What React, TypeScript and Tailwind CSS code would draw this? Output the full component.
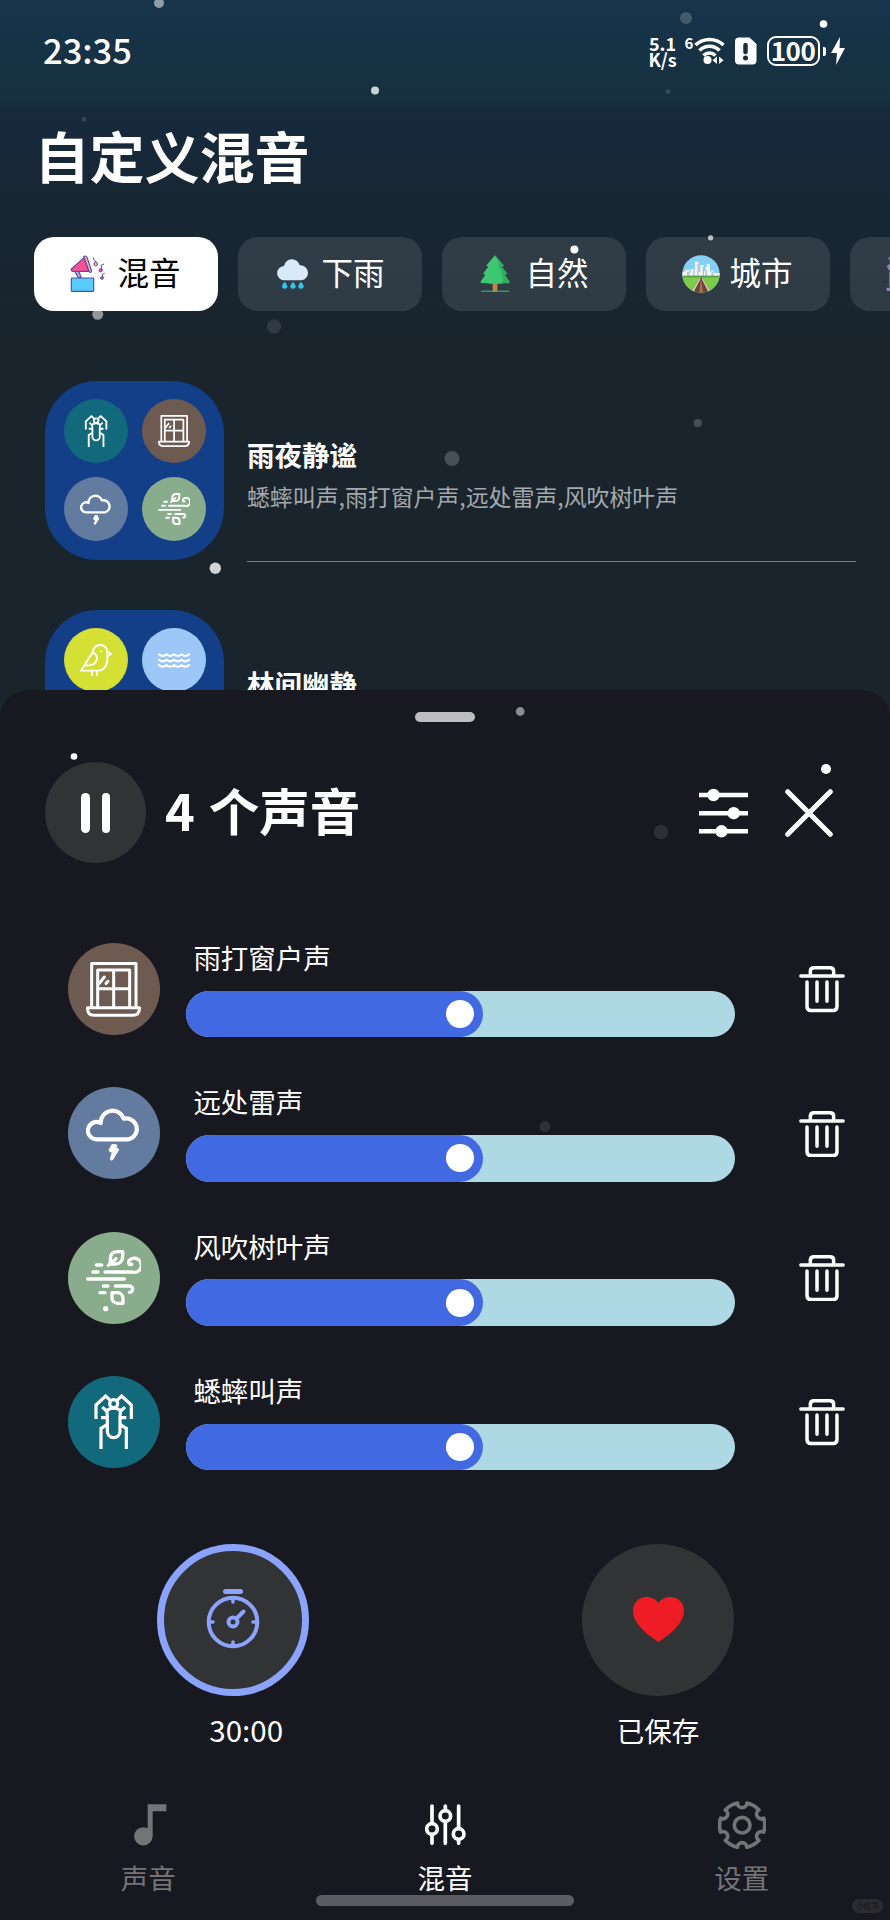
import clsx from "clsx";
import type { ReactNode } from "react";

type SoundId = "cricket" | "window" | "thunder" | "wind" | "bird" | "waves";

const soundColors: Record<SoundId, string> = {
  cricket: "bg-[#12697b]",
  window: "bg-[#6d5b51]",
  thunder: "bg-[#627b9f]",
  wind: "bg-[#89ac8d]",
  bird: "bg-[#d4e033]",
  waves: "bg-[#9cc7f7]",
};

const soundGlyphs: Record<SoundId, ReactNode> = {
  cricket: (
    <g strokeWidth="9.5" strokeLinecap="butt" strokeLinejoin="miter">
      <circle cx="83" cy="29" r="12" />
      <path d="M66 45C60 52 64 60 64 68V112A19 19 0 0 0 102 112V68C102 60 106 52 100 45" />
      <path d="M66 47Q83 38 100 47" />
      <path d="M30 75V33L59 6L73 19M136 75V33L107 6L93 19" />
      <path d="M49 39L63 53M117 39L103 53M45 71H62M121 71H104" />
      <path d="M45 165V103L63 92M121 165V103L103 92" />
    </g>
  ),
  window: (
    <g strokeWidth="9">
      <path d="M17 136V4.500H150V136M35 136V24H131V136M83 24V136M35 80H131" />
      <path d="M40 64L55 45M60 64L66 58" />
      <path d="M4.500 137H160.500C160.500 152 153 160 141 160H24C12 160 4.500 152 4.500 137Z" />
    </g>
  ),
  thunder: (
    <g strokeWidth="12.500">
      <path d="M32 100A26 26 0 1 1 44 51A35.5 35.5 0 0 1 113 38A31 31 0 1 1 128 100Z" />
      <path
        d="M80 119L73 133L83 136L77 159L94 131L84 129L89 120Z"
        fill="currentColor"
        strokeWidth="10"
      />
    </g>
  ),
  wind: (
    <g strokeWidth="10">
      <path d="M57 66H139A21 21 0 1 0 129 32C126 40 131 46 137 43" />
      <path d="M31 45H47M21 66H36M5 87H115M52 108H66M42 128H57" />
      <path d="M88 108H131A9.5 9.5 0 0 1 130 127" />
      <path d="M73 41V26C73 12 82 5 96 5H110V18C110 32 102 42 88 42H74M67 46L90 26" />
      <path d="M78 128H93C104 128 111 136 111 146V160H96C84 160 78 152 78 144Z" />
    </g>
  ),
  bird: (
    <g strokeWidth="5.5" transform="scale(1.72)">
      <path d="M3 80L38 25C40 12 48 3 60 3C73 3 82 12 82 24V46C82 66 70 80 54 80Z" />
      <path d="M82 22L93 30L82 38M38 25C52 30 54 45 46 55C40 63 30 66 14 64" />
      <path d="M36 81V93M51 81V93M63 22V22.1" />
    </g>
  ),
  waves: (
    <g strokeWidth="6" transform="scale(1.72)">
      <path d="M3 31q11 10 22.500 0q11 10 22.500 0q11 10 22.500 0q11 10 22.500 0" />
      <path d="M3 47q11 10 22.500 0q11 10 22.500 0q11 10 22.500 0q11 10 22.500 0" />
      <path d="M3 63q11 10 22.500 0q11 10 22.500 0q11 10 22.500 0q11 10 22.500 0" />
    </g>
  ),
};

function SoundBadge({ id, large }: { id: SoundId; large?: boolean }) {
  return (
    <div
      className={clsx(
        "flex shrink-0 items-center justify-center rounded-full text-white",
        large ? "size-[92px]" : "size-[64px]",
        soundColors[id]
      )}
    >
      <svg
        viewBox="0 0 165 165"
        fill="none"
        stroke="currentColor"
        strokeLinecap="round"
        strokeLinejoin="round"
        className={large ? "size-[55px]" : "size-[32px]"}
      >
        {soundGlyphs[id]}
      </svg>
    </div>
  );
}

function GramophoneIcon() {
  return (
    <svg viewBox="0 0 114 114" className="size-[38px]" fill="none">
      <g stroke="#5b4ba8" strokeWidth="3.5" strokeLinejoin="round">
        <path d="M15 50L25 68H34L26 48Z" fill="#b9a5e0" />
        <rect x="4" y="69" width="67" height="40" rx="2" fill="#5acbfd" />
        <path d="M4 42Q2 48 8 49L56 49L42 8Z" fill="#ff4f93" />
        <path d="M41 5Q46 0 51 7L65 48Q64 54 58 51Z" fill="#fdb59b" />
      </g>
      <g stroke="#5b4ba8" strokeWidth="3">
        <circle cx="77" cy="27" r="5.5" fill="#fdb59b" />
        <path d="M79 22L71 13V7" />
        <circle cx="92" cy="46" r="5" fill="#ff4f93" />
        <path d="M96 45L93 31L102 27" />
        <circle cx="96" cy="69" r="4" fill="#ff4f93" />
        <path d="M99 68L97 58L104 55" />
      </g>
    </svg>
  );
}

function RainIcon() {
  return (
    <svg viewBox="0 0 114 114" className="size-[38px]">
      <path
        d="M32 76A20 20 0 0 1 30 33A24 24 0 0 1 77 31A22 22 0 0 1 82 76Z"
        fill="#d8e9f8"
      />
      <g fill="#35c3ea">
        <path d="M32 80Q40 88 40 94A8 7 0 0 1 24 94Q24 88 32 80Z" />
        <path d="M57 80Q65 88 65 94A8 7 0 0 1 49 94Q49 88 57 80Z" />
        <path d="M81 80Q89 88 89 94A8 7 0 0 1 73 94Q73 88 81 80Z" />
      </g>
    </svg>
  );
}

function TreeIcon() {
  return (
    <svg viewBox="0 0 114 114" className="mr-[1.500px] -ml-[1.500px] size-[38px]">
      <rect x="50" y="84" width="14" height="26" fill="#c68642" />
      <rect x="15" y="107" width="85" height="3" fill="#3cc46c" />
      <path
        d="M57 1L84 32L77 35L94 56L86 59L101 81Q98 87 88 84Q57 90 26 84Q16 87 13 81L28 59L21 56L37 35L30 32Z"
        fill="#3cc870"
      />
      <path
        d="M57 1L84 32L77 35L94 56L86 59L101 81Q98 87 88 84Q78 86 70 86Q90 76 76 62Q84 54 68 38Q74 30 57 1Z"
        fill="#2fae60"
      />
    </svg>
  );
}

function CityIcon() {
  return (
    <svg viewBox="0 0 114 114" className="size-[38px]">
      <clipPath id="city-clip">
        <circle cx="57" cy="57" r="56" />
      </clipPath>
      <g clipPath="url(#city-clip)">
        <rect width="114" height="114" fill="#86d0f7" />
        <path
          d="M0 66V50H10V44H22V54H26V42H34V46H39V20H50V50H55V30H66V48H70V36H74V28H84V50H88V46H94V54H114V66Z"
          fill="#f4f4f2"
        />
        <path
          d="M15 66V50H22V66ZM34 66V46H38V66ZM46 66V26H50V66ZM62 66V34H66V66ZM70 66V46H75V66ZM88 66V50H94V66Z"
          fill="#b8c3d0"
        />
        <rect y="66" width="114" height="48" fill="#7ecb4b" />
        <rect y="62" width="114" height="5" fill="#4f9e48" />
        <path d="M54 68H61L86 114H28Z" fill="#6b4439" />
        <path d="M54 68L28 114H33L55 73ZM61 68L86 114H81L60 73Z" fill="#f0d9c8" />
        <path d="M57 70L52 114H63Z" fill="#a6705c" />
      </g>
    </svg>
  );
}

function TempleIcon() {
  return (
    <svg viewBox="0 0 114 114" className="size-[38px]" fill="#8a86b8">
      <path d="M8 6H106V14H8ZM2 34L14 24H100L112 34L106 46H8ZM10 50H24V94H10ZM90 50H104V94H90ZM2 98H112V108H2Z" />
    </svg>
  );
}

const categories = [
  { name: "混音", icon: <GramophoneIcon />, active: true },
  { name: "下雨", icon: <RainIcon /> },
  { name: "自然", icon: <TreeIcon /> },
  { name: "城市", icon: <CityIcon /> },
  { name: "", icon: <TempleIcon /> },
];

const mixes: { name: string; detail: string; sounds: SoundId[] }[] = [
  {
    name: "雨夜静谧",
    detail: "蟋蟀叫声,雨打窗户声,远处雷声,风吹树叶声",
    sounds: ["cricket", "window", "thunder", "wind"],
  },
  {
    name: "林间幽静",
    detail: "",
    sounds: ["bird", "waves"],
  },
];

const playing: { id: SoundId; name: string; volume: number }[] = [
  { id: "window", name: "雨打窗户声", volume: 50 },
  { id: "thunder", name: "远处雷声", volume: 50 },
  { id: "wind", name: "风吹树叶声", volume: 50 },
  { id: "cricket", name: "蟋蟀叫声", volume: 50 },
];

// x, y, radius, opacity
const snow = [
  [159, 3, 5, 0.52],
  [375, 90.5, 4, 0.78],
  [84, 119, 2.5, 0.12],
  [686, 18, 6, 0.2],
  [668, 91.5, 2.5, 0.12],
  [823.5, 24, 3.8, 1],
  [97.7, 314.3, 5.5, 0.52],
  [274, 326.5, 7.2, 0.1],
  [574.4, 249.6, 4, 1],
  [710.6, 237.8, 2.6, 0.7],
  [452, 458.5, 7.5, 0.2],
  [697.7, 423, 4, 0.2],
  [215.3, 568.3, 5.7, 0.8],
  [520.2, 711.5, 4.4, 0.5],
  [74, 756.5, 3.3, 1],
  [826, 769, 5, 1],
  [661, 832, 7.3, 0.1],
  [545, 1126.5, 5.4, 0.1],
  [105.7, 1308.7, 2.6, 1],
];

function Snow() {
  return (
    <svg
      viewBox="0 0 890 1920"
      fill="#fff"
      className="pointer-events-none absolute inset-0 h-full w-full"
    >
      {snow.map(([x, y, r, opacity]) => (
        <circle key={`${x}-${y}`} cx={x} cy={y} r={r} opacity={opacity} />
      ))}
    </svg>
  );
}

function StatusBar() {
  return (
    <div className="flex h-[102px] shrink-0 items-center justify-between pr-[45px] pl-[43px]">
      <div className="-mt-[5px] text-[34.500px] leading-[52px] font-medium">
        23:35
      </div>
      <div className="flex items-center">
        <div className="flex w-[30px] flex-col items-center text-[18px] leading-[16.500px] font-bold">
          <span>5.1</span>
          <span>K/s</span>
        </div>
        <div className="-mt-[16px] ml-[7px] w-[9px] text-[15px] leading-[22px] font-bold">
          6
        </div>
        <svg viewBox="8 0 32 30" className="h-[30px] w-[32px]">
          <g fill="none" stroke="#fff" strokeWidth="3.600">
            <path d="M9.500 9A20.500 20.500 0 0 1 37.500 9" />
            <path d="M13.500 14.500A14 14 0 0 1 33.500 14.500" />
            <path d="M17.500 19.500A8.500 8.500 0 0 1 29.500 19.500" />
          </g>
          <circle cx="21.500" cy="24" r="4" fill="#fff" />
          <path d="M31 20.500V28L26.500 24.200ZM33 20.500V28L37.500 24.200Z" fill="#fff" />
        </svg>
        <svg viewBox="0 0 22 28" className="ml-[9px] h-[28px] w-[22px]">
          <path
            d="M4 0.500H14.500L21.500 7V23.500A4 4 0 0 1 17.500 27.500H4A4 4 0 0 1 0 23.500V4.500A4 4 0 0 1 4 0.500Z"
            fill="#fff"
          />
          <path d="M10.500 8V15" stroke="#15303f" strokeWidth="4.500" strokeLinecap="round" />
          <circle cx="10.500" cy="21" r="2.500" fill="#15303f" />
        </svg>
        <div className="ml-[10px] flex h-[30px] w-[53px] items-center justify-center rounded-[9px] border-2 border-white text-[26px] leading-[38px] font-bold tracking-[-0.500px]">
          <span className="-mt-[2px]">100</span>
        </div>
        <div className="ml-[3px] h-[9px] w-[3.500px] rounded-r-[2px] bg-white" />
        <svg viewBox="0 0 14 28" className="ml-[5px] h-[28px] w-[14px]" fill="#fff">
          <path d="M9 0L0 16H6L5 28L14 11H8.500Z" />
        </svg>
      </div>
    </div>
  );
}

function Categories() {
  return (
    <div className="mt-[42px] flex shrink-0 gap-[20px] overflow-hidden pl-[34px]">
      {categories.map((category) => (
        <div
          key={category.name}
          className={clsx(
            "flex h-[73.500px] w-[184px] shrink-0 items-center rounded-[20px] pl-[35.500px] text-[31.500px]",
            category.active ? "bg-white text-black" : "bg-white/10 text-white"
          )}
        >
          {category.icon}
          <span className="-mt-[6px] ml-[10px] leading-[48px]">
            {category.name}
          </span>
        </div>
      ))}
    </div>
  );
}

function MixList() {
  return (
    <div className="flex shrink-0 flex-col gap-[50px] pt-[70.200px] pr-[34px] pl-[45.300px]">
      {mixes.map((mix) => (
        <div key={mix.name} className="flex h-[179.500px] gap-[22.700px]">
          <div className="grid w-[179px] shrink-0 grid-cols-2 content-start gap-[14.300px] rounded-[52px] bg-[#133e88] p-[18.300px]">
            {mix.sounds.map((id) => (
              <SoundBadge key={id} id={id} />
            ))}
          </div>
          <div className="flex h-[181.500px] flex-1 flex-col border-b border-[#7b8388] pt-[53px]">
            <div className="text-[27.500px] leading-[40px] font-bold">
              {mix.name}
            </div>
            <div className="mt-[5px] text-[22.900px] leading-[34px] text-[#a3a9ad]">
              {mix.detail}
            </div>
          </div>
        </div>
      ))}
    </div>
  );
}

function TrashIcon() {
  return (
    <svg
      viewBox="0 0 138 140"
      fill="none"
      stroke="#fff"
      strokeWidth="10.500"
      strokeLinecap="round"
      strokeLinejoin="round"
      className="h-[46.600px] w-[46px]"
    >
      <path d="M5.500 30H132.500M34 28V16Q34 5.500 45 5.500H93Q104 5.500 104 16V28" />
      <path d="M24 48V122Q24 134 36 134H102Q114 134 114 122V48M54 48V106M84 48V106" />
    </svg>
  );
}

function VolumeSlider({ volume }: { volume: number }) {
  return (
    <div className="flex h-[46.500px] w-[548.500px] rounded-full bg-[#add8e4]">
      <div
        className="flex items-center justify-end rounded-full bg-[#4169e1] pr-[9px]"
        style={{ width: `calc(${volume}% + 22.7px)` }}
      >
        <div className="size-[28px] rounded-full bg-white" />
      </div>
    </div>
  );
}

function Player() {
  return (
    <div className="flex h-[1230px] flex-col rounded-t-[28px] bg-[#181920]">
      <div className="mx-auto mt-[22px] h-[9.500px] w-[60.500px] rounded-full bg-[#bdbdbf]" />

      <div className="mt-[40.500px] flex h-[101px] items-center pr-[57px] pl-[45px]">
        <div className="flex size-[101px] items-center justify-center gap-[12px] rounded-full bg-[#323335]">
          <div className="h-[40px] w-[8.300px] rounded-full bg-white" />
          <div className="h-[40px] w-[8.300px] rounded-full bg-white" />
        </div>
        <div className="-mt-[8px] ml-[19px] flex-1 text-[50.500px] leading-[74px] font-bold">
          4<span className="ml-[14px]">个声音</span>
        </div>
        <svg viewBox="0 0 49 50" className="h-[50px] w-[49px]" fill="#fff">
          <path d="M0 4.800H49V9.200H0ZM0 23H49V27.400H0ZM0 41.100H49V45.500H0Z" />
          <circle cx="14.500" cy="7" r="6.200" />
          <circle cx="34.700" cy="25.200" r="6.200" />
          <circle cx="22.500" cy="43.300" r="6.200" />
        </svg>
        <svg viewBox="0 0 48 48" className="ml-[37px] size-[48px]">
          <path
            d="M2.700 2.700L45.300 45.300M45.300 2.700L2.700 45.300"
            stroke="#fff"
            strokeWidth="5"
            strokeLinecap="round"
          />
        </svg>
      </div>

      <div className="mt-[80px] flex flex-col gap-[52.300px] pr-[45px] pl-[67.700px]">
        {playing.map((sound) => (
          <div key={sound.id} className="flex h-[92px] items-start">
            <SoundBadge id={sound.id} large />
            <div className="ml-[26.700px] flex-1">
              <div className="-mt-[6px] mb-[12.300px] pl-[7px] text-[27.500px] leading-[41.500px]">
                {sound.name}
              </div>
              <VolumeSlider volume={sound.volume} />
            </div>
            <div className="mt-[1px] self-center">
              <TrashIcon />
            </div>
          </div>
        ))}
      </div>

      <div className="mt-[75.700px] flex justify-between pr-[156px] pl-[156.700px] text-[27.500px]">
        <div className="flex w-[152px] flex-col">
          <div className="flex size-[152px] items-center justify-center rounded-full border-[7px] border-[#8ba3fd] bg-[#323335]">
            <svg
              viewBox="-30 -36 60 66"
              fill="none"
              stroke="#8ba3fd"
              strokeWidth="4"
              strokeLinecap="round"
              className="-mt-[2px] h-[66px] w-[60px]"
            >
              <circle r="24.300" />
              <circle r="4.500" />
              <path d="M3.500 -3.500L10.500 -10.500" />
              <path d="M-7.500 -30.500H7.500" strokeWidth="5" />
              <path
                d="M0 -24V-20M0 24V20M-24 0H-20M24 0H20"
                strokeWidth="3.500"
              />
            </svg>
          </div>
          <div className="mt-[12px] pl-[27px] text-center text-[29.500px] leading-[42px]">
            30:00
          </div>
        </div>
        <div className="flex w-[152px] flex-col">
          <div className="flex size-[152px] items-center justify-center rounded-full bg-[#323335]">
            <svg viewBox="0 0 51 45" className="h-[45px] w-[51px]">
              <path
                d="M25.500 45C20 41 0 29 0 14C0 5 6.500 0 13.500 0C19 0 23 2.500 25.500 6C28 2.500 32 0 37.500 0C44.500 0 51 5 51 14C51 29 31 41 25.500 45Z"
                fill="#ef1c26"
              />
            </svg>
          </div>
          <div className="mt-[13px] text-center leading-[42px]">已保存</div>
        </div>
      </div>

      <TabBar />
    </div>
  );
}

const tabs = [
  {
    name: "声音",
    icon: (
      <svg viewBox="0 0 98 126" className="ml-[5px] h-[42px] w-[32.700px]">
        <circle cx="28" cy="97" r="27.500" fill="currentColor" />
        <path d="M41 1H97V22H56V97H41Z" fill="currentColor" />
      </svg>
    ),
  },
  {
    name: "混音",
    active: true,
    icon: (
      <svg
        viewBox="0 0 124 124"
        fill="none"
        stroke="currentColor"
        strokeWidth="11"
        strokeLinecap="round"
        className="ml-[1px] size-[41.300px]"
      >
        <circle cx="21" cy="75" r="16" />
        <circle cx="61" cy="36" r="16" />
        <circle cx="101" cy="90" r="16" />
        <path d="M21 6V56M21 94V118M61 6V16M61 55V118M101 6V71M101 109V118" />
      </svg>
    ),
  },
  {
    name: "设置",
    icon: (
      <svg
        viewBox="-72.500 -72.500 145 145"
        fill="none"
        stroke="currentColor"
        strokeWidth="11"
        strokeLinejoin="round"
        className="-my-[3.500px] size-[48.300px]"
      >
        <circle r="23.500" />
        <path d="M64.700 -21A68 68 0 0 1 64.700 21A14 14 0 0 0 50.500 45.500A68 68 0 0 1 14.100 66.500A14 14 0 0 0 -14.100 66.500A68 68 0 0 1 -50.500 45.500A14 14 0 0 0 -64.700 21A68 68 0 0 1 -64.700 -21A14 14 0 0 0 -50.500 -45.500A68 68 0 0 1 -14.100 -66.500A14 14 0 0 0 14.100 -66.500A68 68 0 0 1 50.500 -45.500A14 14 0 0 0 64.700 -21Z" />
      </svg>
    ),
  },
];

function TabBar() {
  return (
    <div className="mt-[53.500px] grid grid-cols-3">
      {tabs.map((tab) => (
        <div
          key={tab.name}
          className={clsx(
            "flex flex-col items-center",
            tab.active ? "text-white" : "text-[#747476]"
          )}
        >
          <div className="flex h-[42px] items-center">{tab.icon}</div>
          <div className="mt-[9.500px] text-[27.500px] leading-[42px]">
            {tab.name}
          </div>
        </div>
      ))}
    </div>
  );
}

export default function App() {
  return (
    <div className="relative h-[1920px] w-[890px] overflow-hidden bg-[linear-gradient(180deg,#16344b_0px,#16303f_95px,#16293d_115px,#182733_200px,#19242d_350px,#19242c_700px)] font-['Noto_Sans_CJK_SC',sans-serif] text-white">
      <div className="flex h-[690px] flex-col overflow-hidden">
        <StatusBar />
        <h1 className="mt-[11px] pl-[34.500px] text-[55px] leading-[82px] font-bold">
          自定义混音
        </h1>
        <Categories />
        <MixList />
      </div>
      <Player />
      <Snow />
      <div className="absolute top-[1895px] left-[316px] h-[11px] w-[257.500px] rounded-full bg-[#5c5c63]" />
      <div className="absolute top-[1899px] left-[852px] flex h-[14px] w-[31px] items-center justify-center rounded-full bg-[#2c2c30] text-[7.500px] leading-[14px] text-[#0f0f12]">
        小红书
      </div>
    </div>
  );
}
